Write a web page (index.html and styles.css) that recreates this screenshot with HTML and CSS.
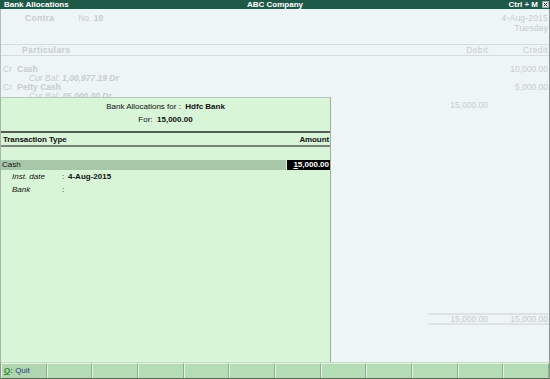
FILE: index.html
```html
<!DOCTYPE html>
<html>
<head>
<meta charset="utf-8">
<link rel="stylesheet" href="styles.css">
</head>
<body>
<div class="app">
  <div class="titlebar">
    <span class="tb-left">Bank Allocations</span>
    <span class="tb-center">ABC Company</span>
    <span class="tb-right">Ctrl + M <span class="closebox"><svg width="7" height="7" viewBox="0 0 7 7"><rect x="0.5" y="0.5" width="6" height="6" fill="#e8eeee" stroke="#9aa" stroke-width="1"/><path d="M1.8 1.8 L5.2 5.2 M5.2 1.8 L1.8 5.2" stroke="#223" stroke-width="1"/></svg></span></span>
  </div>
  <div class="main">
    <div class="vhead">
      <div class="vh-left"><span class="b vtype">Contra</span><span class="vno">No. <span class="b">10</span></span></div>
      <div class="vh-right"><div>4-Aug-2015</div><div>Tuesday</div></div>
    </div>
    <div class="colhead">
      <span class="part b">Particulars</span>
      <span class="dr">Debit</span>
      <span class="cr">Credit</span>
    </div>
    <div class="entries">
      <div class="erow"><span class="part"><span class="drcr">Cr</span><span class="b">Cash</span></span><span class="dr"></span><span class="cr">10,000.00</span></div>
      <div class="erow"><span class="part bal"><i>Cur Bal:</i> <i class="b">1,00,977.19 Dr</i></span></div>
      <div class="erow"><span class="part"><span class="drcr">Cr</span><span class="b">Petty Cash</span></span><span class="dr"></span><span class="cr">5,000.00</span></div>
      <div class="erow"><span class="part bal"><i>Cur Bal:</i> <i class="b">45,000.00 Dr</i></span></div>
      <div class="erow"><span class="part"><span class="drcr">Dr</span><span class="b">Hdfc Bank</span></span><span class="dr">15,000.00</span><span class="cr"></span></div>
    </div>
    <div class="totals">
      <span class="dr">15,000.00</span><span class="cr">15,000.00</span>
    </div>

    <div class="panel">
      <div class="ptitle">Bank Allocations for :&nbsp; <span class="b">Hdfc Bank</span></div>
      <div class="pfor">For:&nbsp; <span class="b">15,000.00</span></div>
      <div class="phead"><span class="b">Transaction Type</span><span class="b">Amount</span></div>
      <div class="prow">
        <span class="pr-name">Cash</span>
        <span class="pr-amt"><u>1</u>5,000.00</span>
      </div>
      <div class="pdet"><i class="pl">Inst. date</i><span class="pc">:</span><span class="b">4-Aug-2015</span></div>
      <div class="pdet"><i class="pl">Bank</i><span class="pc">:</span></div>
    </div>
  </div>
  <div class="bottombar">
    <div class="btn"><span class="key">Q</span><span class="keyc">:</span> <span class="lbl">Quit</span></div>
    <div class="btn"></div><div class="btn"></div><div class="btn"></div>
    <div class="btn"></div><div class="btn"></div><div class="btn"></div>
    <div class="btn"></div><div class="btn"></div><div class="btn"></div>
    <div class="btn"></div><div class="btn"></div>
  </div>
</div>
</body>
</html>
```

FILE: styles.css
```css
* { box-sizing: border-box; }
html, body { margin: 0; padding: 0; }
body {
  width: 550px;
  height: 379px;
  overflow: hidden;
  font-family: "Liberation Sans", Arial, sans-serif;
  font-size: 8px;
  background: #eef5f5;
}
.b { font-weight: bold; }
.app { width: 550px; height: 379px; display: flex; flex-direction: column; }

.titlebar {
  height: 9px;
  background: #1f5a48;
  color: #fff;
  font-weight: bold;
  font-size: 8px;
  line-height: 9px;
  display: flex;
  align-items: center;
  position: relative;
  padding: 0 1px 0 4px;
}
.tb-left { flex: 1; }
.tb-center { position: absolute; left: 0; right: 0; text-align: center; pointer-events: none; }
.tb-right { display: flex; align-items: center; gap: 4px; }
.closebox { display: flex; width: 7px; height: 7px; }

.main {
  flex: 1;
  position: relative;
  display: flex;
  flex-direction: column;
  border-left: 1px solid #b4bcbc;
  border-right: 1px solid #8a9292;
  color: #c6cdcd;
}

.vhead {
  display: flex;
  justify-content: space-between;
  padding: 4px 1px 0 24px;
  height: 35px;
  line-height: 10px;
  font-size: 8.5px;
}
.vh-left { display: flex; gap: 24px; }
.vtype { letter-spacing: 0.3px; }
.vh-right { text-align: right; letter-spacing: 0.2px; }

.colhead {
  display: flex;
  height: 12px;
  line-height: 11px;
  border-top: 1px solid #d4dcdc;
  border-bottom: 1px solid #d4dcdc;
  font-size: 8.5px;
  letter-spacing: 0.4px;
}
.colhead .part { padding-left: 21px; }
.part { flex: 1; }
.dr { width: 60px; text-align: right; }
.cr { width: 61px; text-align: right; padding-right: 1px; }

.entries { padding-top: 9px; font-size: 8.5px; }
.erow { display: flex; height: 9px; line-height: 9px; }
.drcr { display: inline-block; width: 16px; padding-left: 2px; }
.bal { padding-left: 28px; }

.totals {
  margin-top: auto;
  margin-bottom: 37px;
  margin-left: auto;
  width: 121px;
  display: flex;
  height: 12px;
  line-height: 9px;
  border-top: 2px solid #dde3e3;
  border-bottom: 2px solid #dde3e3;
  font-size: 8.5px;
}

.panel {
  position: absolute;
  left: -1px;
  top: 88px;
  width: 331px;
  height: 265px;
  background: #d8f5d8;
  border-top: 1px solid #b9c9b9;
  border-left: 1px solid #a8b4a8;
  border-right: 1px solid #a3aba3;
  color: #111;
  font-size: 8px;
  padding-top: 4px;
}
.ptitle, .pfor { text-align: center; line-height: 10px; height: 10px; }
.pfor { margin-top: 3px; }
.phead {
  margin-top: 6px;
  display: flex;
  justify-content: space-between;
  border-top: 2px solid #555b55;
  border-bottom: 2px solid #7a827a;
  height: 16px;
  line-height: 13px;
  padding: 0 1px 0 2px;
}
.phead .b { letter-spacing: -0.1px; }
.prow {
  margin-top: 13px;
  display: flex;
  height: 10px;
  line-height: 10px;
}
.pr-name { flex: 1; background: #a8c7a8; padding-left: 1px; margin-right: 1px; }
.pr-amt {
  width: 43px;
  background: #000;
  color: #fff;
  text-align: right;
  padding-right: 1px;
  font-weight: bold;
}
.pr-amt u { text-decoration-thickness: 1px; }
.pdet { display: flex; height: 12px; line-height: 12px; margin-top: 1px; }
.pl { width: 61px; padding-left: 11px; }
.pc { width: 6px; }

.bottombar {
  height: 17px;
  display: grid;
  grid-template-columns: repeat(12, 1fr);
  background: #b5ddb5;
  border-top: 1px solid #c6d8c6;
  border-bottom: 1px solid #5d665d;
  border-left: 1px solid #8a9a8a;
  border-right: 1px solid #8a9a8a;
}
.btn {
  border-left: 1px solid #e2f3e2;
  border-right: 1px solid #8fae8f;
  border-top: 1px solid #e2f3e2;
  line-height: 14px;
  padding-left: 2px;
  font-size: 8px;
}
.btn:first-child { background: #b0d6b0; }
.key { color: #2b8a2b; font-weight: bold; text-decoration: underline; }
.keyc { color: #2b8a2b; font-weight: bold; }
.lbl { color: #2a3a86; }
```
